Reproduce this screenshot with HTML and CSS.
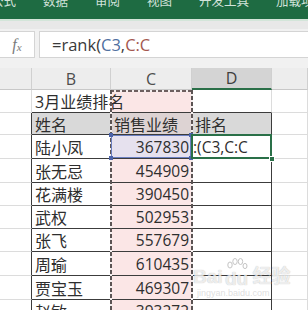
FILE: index.html
```html
<!DOCTYPE html>
<html lang="zh-CN">
<head>
<meta charset="utf-8">
<title>rank</title>
<link rel="stylesheet" href="styles.css">
</head>
<body>
<div class="ribbon">
  <span class="tab first">公式</span>
  <span class="tab">数据</span>
  <span class="tab">审阅</span>
  <span class="tab">视图</span>
  <span class="tab">开发工具</span>
  <span class="tab">加载项</span>
</div>
<div class="strip"></div>
<div class="fbar">
  <div class="fx"><span class="fx-f">f</span><span class="fx-x">x</span></div>
  <div class="input">=rank(<span class="ref-blue">C3</span>,<span class="ref-red">C:C</span></div>
</div>
<div class="sheet">
  <div class="grid">
    <div class="h"></div>
    <div class="h">B</div>
    <div class="h">C</div>
    <div class="h sel">D</div>
    <div class="h"></div>

    <div class="c"></div>
    <div class="c top title">3月业绩排名</div>
    <div class="c top pink"></div>
    <div class="c top"></div>
    <div class="c"></div>

    <div class="c edge"></div>
    <div class="c t hd">姓名</div>
    <div class="c t hd hdpink">销售业绩</div>
    <div class="c t hd">排名</div>
    <div class="c"></div>

    <div class="c edge"></div>
    <div class="c t">陆小凤</div>
    <div class="c t num ref">367830<span class="hdl tl"></span><span class="hdl tr"></span><span class="hdl bl"></span><span class="hdl br"></span></div>
    <div class="c t active">:(C3,C:C<span class="fill"></span></div>
    <div class="c"></div>

    <div class="c edge"></div>
    <div class="c t">张无忌</div>
    <div class="c t num pink">454909</div>
    <div class="c t"></div>
    <div class="c"></div>

    <div class="c edge"></div>
    <div class="c t">花满楼</div>
    <div class="c t num pink">390450</div>
    <div class="c t"></div>
    <div class="c"></div>

    <div class="c edge"></div>
    <div class="c t">武权</div>
    <div class="c t num pink">502953</div>
    <div class="c t"></div>
    <div class="c"></div>

    <div class="c edge"></div>
    <div class="c t">张飞</div>
    <div class="c t num pink">557679</div>
    <div class="c t"></div>
    <div class="c"></div>

    <div class="c edge"></div>
    <div class="c t">周瑜</div>
    <div class="c t num pink">610435</div>
    <div class="c t"></div>
    <div class="c"></div>

    <div class="c edge"></div>
    <div class="c t">贾宝玉</div>
    <div class="c t num pink">469307</div>
    <div class="c t"></div>
    <div class="c"></div>

    <div class="c edge"></div>
    <div class="c t">赵敏</div>
    <div class="c t num pink">393272</div>
    <div class="c t"></div>
    <div class="c"></div>
  </div>
  <div class="ants"></div>
  <div class="mark">
    <div class="mark-row"><span>Bai</span><span class="du"><svg class="paw" width="24" height="22" viewBox="0 0 24 22"><g fill="none" stroke="#c4c4c4" stroke-width="1"><ellipse cx="5" cy="7" rx="2.2" ry="3"/><ellipse cx="10" cy="3.5" rx="2.2" ry="3"/><ellipse cx="15.5" cy="3.5" rx="2.2" ry="3"/><ellipse cx="20" cy="8" rx="2" ry="2.6"/></g></svg>du</span><span class="jy">经验</span></div>
    <div class="mark-url">jingyan.baidu.com</div>
  </div>
</div>
</body>
</html>
```
FILE: styles.css
```css
* { box-sizing: border-box; }

body {
  margin: 0;
  width: 308px;
  height: 310px;
  overflow: hidden;
  background: #fff;
  font-family: "Open Sans", "Noto Sans CJK SC", sans-serif;
  color: #2e2e2e;
}

.ribbon {
  height: 19px;
  background: #1e6b42;
  display: flex;
  gap: 27px;
  overflow: hidden;
  color: rgba(236, 246, 240, 0.88);
  font-family: "Noto Sans CJK SC", sans-serif;
  font-size: 12.5px;
  line-height: 12.5px;
}

.tab {
  margin-top: -5px;
  white-space: nowrap;
}

.tab.first { margin-left: -9px; }

.strip {
  height: 10px;
  background: #e8e8e8;
  border-top: 2px solid #d3e5d9;
}

.fbar {
  height: 39px;
  padding-top: 2px;
  background: #f1f1f1;
  display: flex;
  align-items: flex-start;
}

.fx {
  width: 35px;
  height: 27px;
  background: #fff;
  border: 1px solid #d4d4d4;
  border-left: none;
  display: flex;
  align-items: center;
  justify-content: center;
  font-family: "Liberation Serif", serif;
  font-style: italic;
  color: #7a7a7a;
}

.fx-f { font-size: 16px; }
.fx-x { font-size: 11px; margin-top: 4px; }

.input {
  flex: 1;
  height: 27px;
  margin-left: 4px;
  padding-left: 12px;
  background: #fff;
  border: 1px solid #d4d4d4;
  border-right: none;
  display: flex;
  align-items: center;
  font-size: 16.5px;
  color: #3a3a3a;
  white-space: pre;
}

.ref-blue { color: #50709f; }
.ref-red { color: #a4574f; }

.sheet {
  position: relative;
}

.grid {
  display: grid;
  grid-template-columns: 32px 79px 81px 80px 36px;
  grid-template-rows: 22px 23px 22px 24px 24px 23px 23px 23px 24px 24px 23px;
}

.h {
  background: #ededed;
  border-right: 1px solid #d0d0d0;
  border-bottom: 1px solid #c8c8c8;
  display: flex;
  align-items: center;
  justify-content: center;
  font-size: 16px;
  color: #4e4e4e;
}

.h.sel {
  background: #d4d4d4;
  border-bottom: 2px solid #2a6f48;
  color: #3f3f3f;
}

.c {
  border-right: 1px solid #dcdcdc;
  border-bottom: 1px solid #dcdcdc;
  display: flex;
  align-items: center;
  padding: 0 3px;
  font-size: 16px;
  white-space: nowrap;
}

.c.edge { border-right-color: #3c3c3c; }
.c.top { border-bottom-color: #3c3c3c; }
.c.t {
  border-right-color: #3c3c3c;
  border-bottom-color: #3c3c3c;
}

.c.title {
  position: relative;
  z-index: 1;
  overflow: visible;
  border-right-color: transparent;
}

.c.hd { background: #d9d9d9; }
.c.hdpink { background: #ddd3d3; }
.c.pink { background: #fbe6e6; }

.c.num {
  justify-content: flex-end;
  padding-right: 2px;
  font-size: 15.5px;
}

.c.ref {
  position: relative;
  z-index: 3;
  background: #e6e1ee;
  box-shadow: inset 0 0 0 1px #6b7fc0;
}

.hdl {
  position: absolute;
  width: 4px;
  height: 4px;
  background: #4b62a8;
}
.hdl.tl { left: -2px; top: -2px; }
.hdl.tr { right: -2px; top: -2px; }
.hdl.bl { left: -2px; bottom: -2px; }
.hdl.br { right: -2px; bottom: -2px; }

.c.active {
  position: relative;
  z-index: 3;
  padding-left: 1px;
  overflow: visible;
  font-size: 15.5px;
}

.c.active::after {
  content: "";
  position: absolute;
  inset: -1px -1px -1px -1px;
  border: 2px solid #2a7048;
  pointer-events: none;
}

.fill {
  position: absolute;
  right: -4px;
  bottom: -4px;
  width: 6px;
  height: 6px;
  background: #2a7048;
  border: 1px solid #fff;
  z-index: 4;
}

.ants {
  position: absolute;
  left: 110px;
  top: 22px;
  width: 83px;
  bottom: 0;
  z-index: 2;
  pointer-events: none;
  background:
    repeating-linear-gradient(to bottom, #5b5353 0 4px, #f4eeee 4px 6px) left top / 2px 100% no-repeat,
    repeating-linear-gradient(to bottom, #5b5353 0 4px, #f4eeee 4px 6px) right top / 2px 100% no-repeat,
    repeating-linear-gradient(to right, #6d5e5e 0 4px, #f4eeee 4px 6px) left top / 100% 2px no-repeat;
}

.mark {
  position: absolute;
  left: 193px;
  top: 190px;
  z-index: 5;
  color: rgba(255, 255, 255, 0.75);
  text-shadow: 0 0 1px rgba(0, 0, 0, 0.3);
  pointer-events: none;
}

.mark-row {
  display: flex;
  align-items: flex-end;
  font-family: "Liberation Sans", "Noto Sans CJK SC", sans-serif;
  font-size: 19px;
  font-weight: bold;
  line-height: 22px;
}

.du {
  display: flex;
  flex-direction: column;
  align-items: center;
  margin-left: 2px;
  line-height: 18px;
}

.paw { margin-bottom: -10px; }

.jy { margin-left: 4px; }

.mark-url {
  padding-left: 4px;
  font-family: "Liberation Sans", sans-serif;
  font-size: 9px;
  line-height: 11px;
  color: rgba(200, 200, 200, 0.6);
  text-shadow: none;
}
```
